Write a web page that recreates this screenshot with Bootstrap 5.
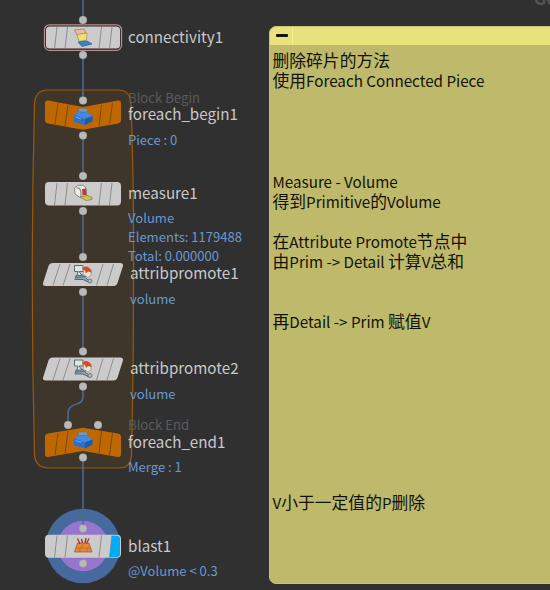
<!DOCTYPE html>
<html lang="zh-CN">
<head>
<meta charset="utf-8">
<meta name="viewport" content="width=device-width, initial-scale=1">
<title>Network editor</title>
<link rel="stylesheet" href="https://cdn.jsdelivr.net/npm/bootstrap@5.3.0/dist/css/bootstrap.min.css">
<style>
body{background:#303030;font-family:"Noto Sans CJK SC",sans-serif;}
.network{width:550px;height:590px;}
.graph{left:0;top:0;}
.label{left:128px;margin-top:-1px;font-size:15.2px;line-height:20px;color:#c9c9c9;}
.info{left:128px;margin-top:-1px;font-size:13.05px;line-height:19px;color:#6a98d2;}
.kind{left:128px;font-size:13.15px;line-height:18px;color:#5b5b5b;}
.slanted{left:130px;}
.ghost{font-size:17px;line-height:20px;top:-12px;}
.sticky-note{left:268.5px;top:26px;width:300px;height:558px;border-radius:7px;background:#bfba6b;border:1px solid #cac572;color:#12120c;}
.note-bar{height:18px;background:#e9e27c;}
.collapse-btn{width:23px;border-right:1px solid #f5ef94;}
.collapse-btn i{width:12px;height:3px;margin-right:-3px;margin-top:-1px;border-radius:1px;background:#14140c;}
.note-text{font-size:16.8px;line-height:20.1px;padding:5px 0 0 3px;}
.note-text span{font-size:15.2px;line-height:1;}
</style>
<script src="https://cdn.jsdelivr.net/npm/bootstrap@5.3.0/dist/js/bootstrap.bundle.min.js"></script>
</head>
<body class="m-0 overflow-hidden">
<main class="network position-relative overflow-hidden text-nowrap">
<svg class="graph position-absolute" width="550" height="590" viewBox="0 0 550 590">
<defs>
<g id="ticks" stroke="#858688" stroke-width=".9"><path d="M57 1L54.500 23M67.500 1L65 23M101.500 1L99 23M112 1L109.500 23"/></g>
<g id="slab"><path d="M53 0H120Q124 0 122.800 3.500L117.500 20Q116.500 23 113.500 23H46Q42 23 43.200 19.500L48.500 3Q49.500 0 53 0Z" fill="#cbcbcb"/>
<path d="M60 1L53 22.500M70 1L63 22.500M103 1L96.500 22.500M113.500 1L107 22.500" stroke="#858688" stroke-width=".9"/></g>
<g id="brick"><path d="M-9 -2L-5 -4V-7Q0 -10 5 -7V-4L9.500 -1V4L2 8L-9 5Z" fill="#2e70c7"/><path d="M-9 -2L-5 -4V-6Q0 -3 5 -6V-4L9.500 -1L2 2Z" fill="#4389dc"/><path d="M2 2L9.500 -1V4L2 8Z" fill="#2459a5"/><ellipse cx="0" cy="-6.800" rx="4.500" ry="1.600" fill="#7897bd"/><path d="M-7.500 0L-2 2" stroke="#70a8e8"/></g>
<g id="promote" stroke-linejoin="round"><path d="M-7 2L-1 1L3 5L8 8L6 9L0 6L-8 6Z" fill="#8fa6b1" stroke="#536a75" stroke-width="1"/><path d="M-8.500 -8H0V-2H-4L-1 2H-6L-5 -2H-8.500Z" fill="#dfe6e3" stroke="#5c6b70" stroke-width="1"/><path d="M1 -4H8V2L5 4L0 1Z" fill="#e6e5dc" stroke="#8c8c84" stroke-width=".7"/><path d="M-1 -5Q3 -9 7 -5L9 -1L5 -2L3 0L2 -3Z" fill="#dc491f"/><path d="M-7 4L3 3" fill="none" stroke="#5f7e8e" stroke-width="1.500"/><circle cx="7" cy="7.500" r="2" fill="#a8bcc4" stroke="#62747b" stroke-width=".9"/></g>
</defs>
<!-- for-each block -->
<path d="M46 90H118Q130 90 131 103Q134 185 133.500 280Q133.500 370 131.500 455Q131 468 119 468H47Q35.500 467 34.500 455Q30 280 34.500 103Q35.500 91 46 90Z" fill="#3e352b" stroke="#9d5808" stroke-width="1.200"/>
<!-- display ring -->
<circle cx="83" cy="546" r="37.300" fill="#476a9e"/><circle cx="83" cy="546" r="25.300" fill="#9576cc"/>
<!-- wires -->
<path d="M83 0V20M83 55V100M83 135V176M83 211V257M83 292V352M83 386V397C83 407 68 401 68 414V425M83 457V528" fill="none" stroke="#4b6b94" stroke-width="1.500"/>
<!-- connectivity1 -->
<rect x="44.500" y="24.800" width="77" height="25.500" rx="5" fill="#222" stroke="#bd8e90" stroke-width="1.300"/>
<rect x="46" y="26.500" width="74" height="22" rx="3.500" fill="#cbcbcb"/><use href="#ticks" y="26"/>
<g stroke-width=".7"><path d="M74.500 30L84 29L86 33L77 35Z" fill="#efb8b1" stroke="#c3615d"/><path d="M77 34.500L87 33L86.500 40L79 41.500Z" fill="#eee26d" stroke="#98904a"/><path d="M78 42L87 41L92 44L82 46.500Z" fill="#3b82ca" stroke="#285d94"/></g>
<!-- foreach_begin1 -->
<path d="M48 100.500L83 107L118 100.500Q121 100 121 103V120Q121 123 118 123.500L83 129.800L48 123.500Q45 123 45 120V103Q45 100 48 100.500Z" fill="#c06800"/>
<path d="M58 103L55 124M68 105L65 126M101.500 105L99 126M112.500 103L109.500 124" stroke="#7d4907"/>
<use href="#brick" x="83" y="117"/>
<!-- measure1 -->
<rect x="45" y="182" width="76" height="23.500" rx="4" fill="#cbcbcb"/><use href="#ticks" y="182"/>
<path d="M74.500 188Q77 184.500 82 185Q86 186 86.500 190V196L80 197.500L75 194Z" fill="#eeeee8" stroke="#74746f" stroke-width=".8"/><path d="M76.500 188Q80.500 187 81 193V197" fill="none" stroke="#7e8a84" stroke-width="1.200"/><path d="M82 189L86 188.500V195L82.500 195.500Z" fill="#c23a3c"/><path d="M80 197L87 195.500L92 197.500V199.500L86 200.500Z" fill="#d4c54c" stroke="#817537" stroke-width=".7"/>
<!-- attribute promotes -->
<use href="#slab" y="263"/><use href="#promote" x="83" y="273.500"/>
<use href="#slab" y="357.500"/><use href="#promote" x="83" y="368"/>
<!-- foreach_end1 -->
<path d="M48 433.500L83 427.800L118 433.500Q121 434 121 437V454Q121 457.500 118 457L83 451L48 457Q45 457.500 45 454V437Q45 434 48 433.500Z" fill="#c06800"/>
<path d="M58 433L55 455M68 431L65 453.500M101.500 431L99 453.500M112.500 433L109.500 455" stroke="#7d4907"/>
<use href="#brick" x="83" y="440.500"/>
<!-- blast1 -->
<rect x="45" y="534.800" width="76" height="23" rx="4" fill="#cbcbcb"/><use href="#ticks" y="534.500"/><path d="M112 535.800H117Q120 536 120 539V554Q120 557 117 557H109.500Z" fill="#00adf5"/>
<path d="M77.500 543H89L92 552H74.500Z" fill="#e08a3a" stroke="#a35516" stroke-width=".7"/><path d="M76 548H91M80 549V552M87 548V552M83 544L81 548" stroke="#b8661f" stroke-width=".7"/><path d="M77.500 538.500L80 544M81.500 539L82.500 543M86 538L85 543M89 538.500L86.500 543.500" stroke="#a72c30" stroke-width="1.300"/>
<g fill="#b9b9b9" stroke="#555" stroke-opacity=".25" stroke-width=".7"><circle cx="83" cy="20" r="4"/><circle cx="83" cy="55" r="4"/><circle cx="83" cy="100.500" r="4"/><circle cx="83" cy="135.500" r="4"/><circle cx="83" cy="176" r="4"/><circle cx="83" cy="211" r="4"/><circle cx="83" cy="257" r="4"/><circle cx="83" cy="292" r="4"/><circle cx="83" cy="351.500" r="4"/><circle cx="83" cy="386.500" r="4"/><circle cx="68" cy="425" r="4"/><circle cx="98" cy="425" r="4"/><circle cx="83" cy="457.500" r="4"/><circle cx="83" cy="528.500" r="4"/><circle cx="83" cy="563.500" r="4"/></g>
</svg>
<div class="label position-absolute" style="top:27px">connectivity1</div>
<div class="kind position-absolute" style="top:89px">Block Begin</div>
<div class="label position-absolute" style="top:104px">foreach_begin1</div>
<div class="info position-absolute" style="top:131px">Piece : 0</div>
<div class="label position-absolute" style="top:183px">measure1</div>
<div class="info position-absolute" style="top:209px">Volume<br>Elements: 1179488<br>Total: 0.000000</div>
<div class="label slanted position-absolute" style="top:263px">attribpromote1</div>
<div class="info slanted position-absolute" style="top:290px">volume</div>
<div class="label slanted position-absolute" style="top:358px">attribpromote2</div>
<div class="info slanted position-absolute" style="top:385px">volume</div>
<div class="kind position-absolute" style="top:416px">Block End</div>
<div class="label position-absolute" style="top:432px">foreach_end1</div>
<div class="info position-absolute" style="top:458px">Merge : 1</div>
<div class="label position-absolute" style="top:536px">blast1</div>
<div class="info position-absolute" style="top:562px">@Volume &lt; 0.3</div>
<div class="ghost position-absolute fw-bold" style="left:534px;color:#555">Geo</div>
<section class="sticky-note position-absolute overflow-hidden">
<div class="note-bar d-flex"><div class="collapse-btn d-flex align-items-center justify-content-center"><i class="d-block"></i></div></div>
<div class="note-text">删除碎片的方法<br>使用<span>Foreach Connected Piece</span><br><br><br><br><br><span>Measure - Volume</span><br>得到<span>Primitive</span>的<span>Volume</span><br><br>在<span>Attribute Promote</span>节点中<br>由<span>Prim -&gt; Detail </span>计算<span>V</span>总和<br><br><br>再<span>Detail -&gt; Prim </span>赋值<span>V</span><br><br><br><br><br><br><br><br><br><span>V</span>小于一定值的<span>P</span>删除</div>
</section>
</main>
</body>
</html>
